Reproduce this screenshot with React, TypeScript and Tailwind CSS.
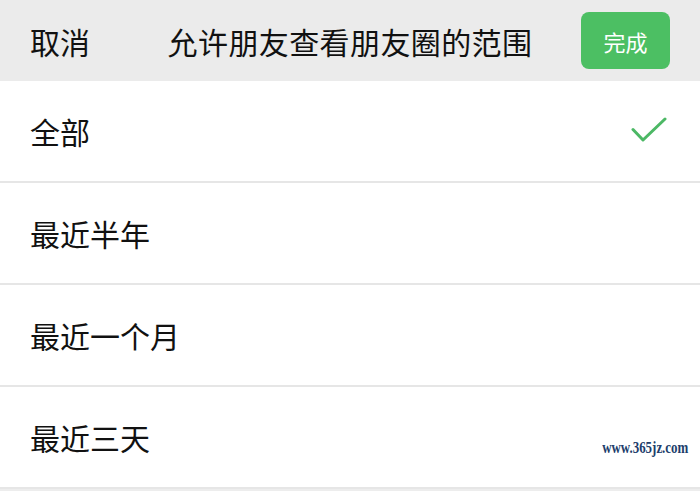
import React from "react";

const rows = ["全部", "最近半年", "最近一个月", "最近三天"];

export default function App() {
  return (
    <div
      className="relative w-[700px] h-[491px] overflow-hidden bg-[#ededed]"
      style={{ fontFamily: '"Noto Sans CJK SC", "Noto Sans", sans-serif' }}
    >
      <div className="grid grid-cols-[1fr_auto_1fr] items-center h-[81px] bg-[#ebebeb] px-[30px]">
        <div className="text-[30px] leading-none text-[#111]">取消</div>
        <div className="text-[30px] leading-none text-[#111] tracking-[0.4px]">允许朋友查看朋友圈的范围</div>
        <div className="flex justify-end">
          <div className="w-[89px] h-[57px] rounded-[8px] bg-[#4cbf63] flex items-center justify-center text-white text-[22px] leading-none">
            完成
          </div>
        </div>
      </div>
      <div className="flex flex-col">
        {rows.map((r, i) => (
          <div
            key={r}
            className="h-[102px] bg-white border-b-2 border-[#e6e6e6] flex items-center justify-between pl-[30px] pr-[33px]"
          >
            <span className="text-[30px] leading-none text-[#111]">{r}</span>
            {i === 0 && (
              <svg width="36" height="28" viewBox="0 0 36 28" fill="none">
                <path
                  d="M2 12.5 L12 23 L34 2"
                  stroke="#4cb865"
                  strokeWidth="3"
                  strokeLinecap="round"
                  strokeLinejoin="round"
                />
              </svg>
            )}
          </div>
        ))}
      </div>
      <div
        className="absolute right-[12px] top-[439px] text-[17px] font-bold leading-none text-[#213d6b] origin-right scale-x-[0.76]"
        style={{ fontFamily: '"Liberation Serif", serif' }}
      >
        www.365jz.com
      </div>
    </div>
  );
}
